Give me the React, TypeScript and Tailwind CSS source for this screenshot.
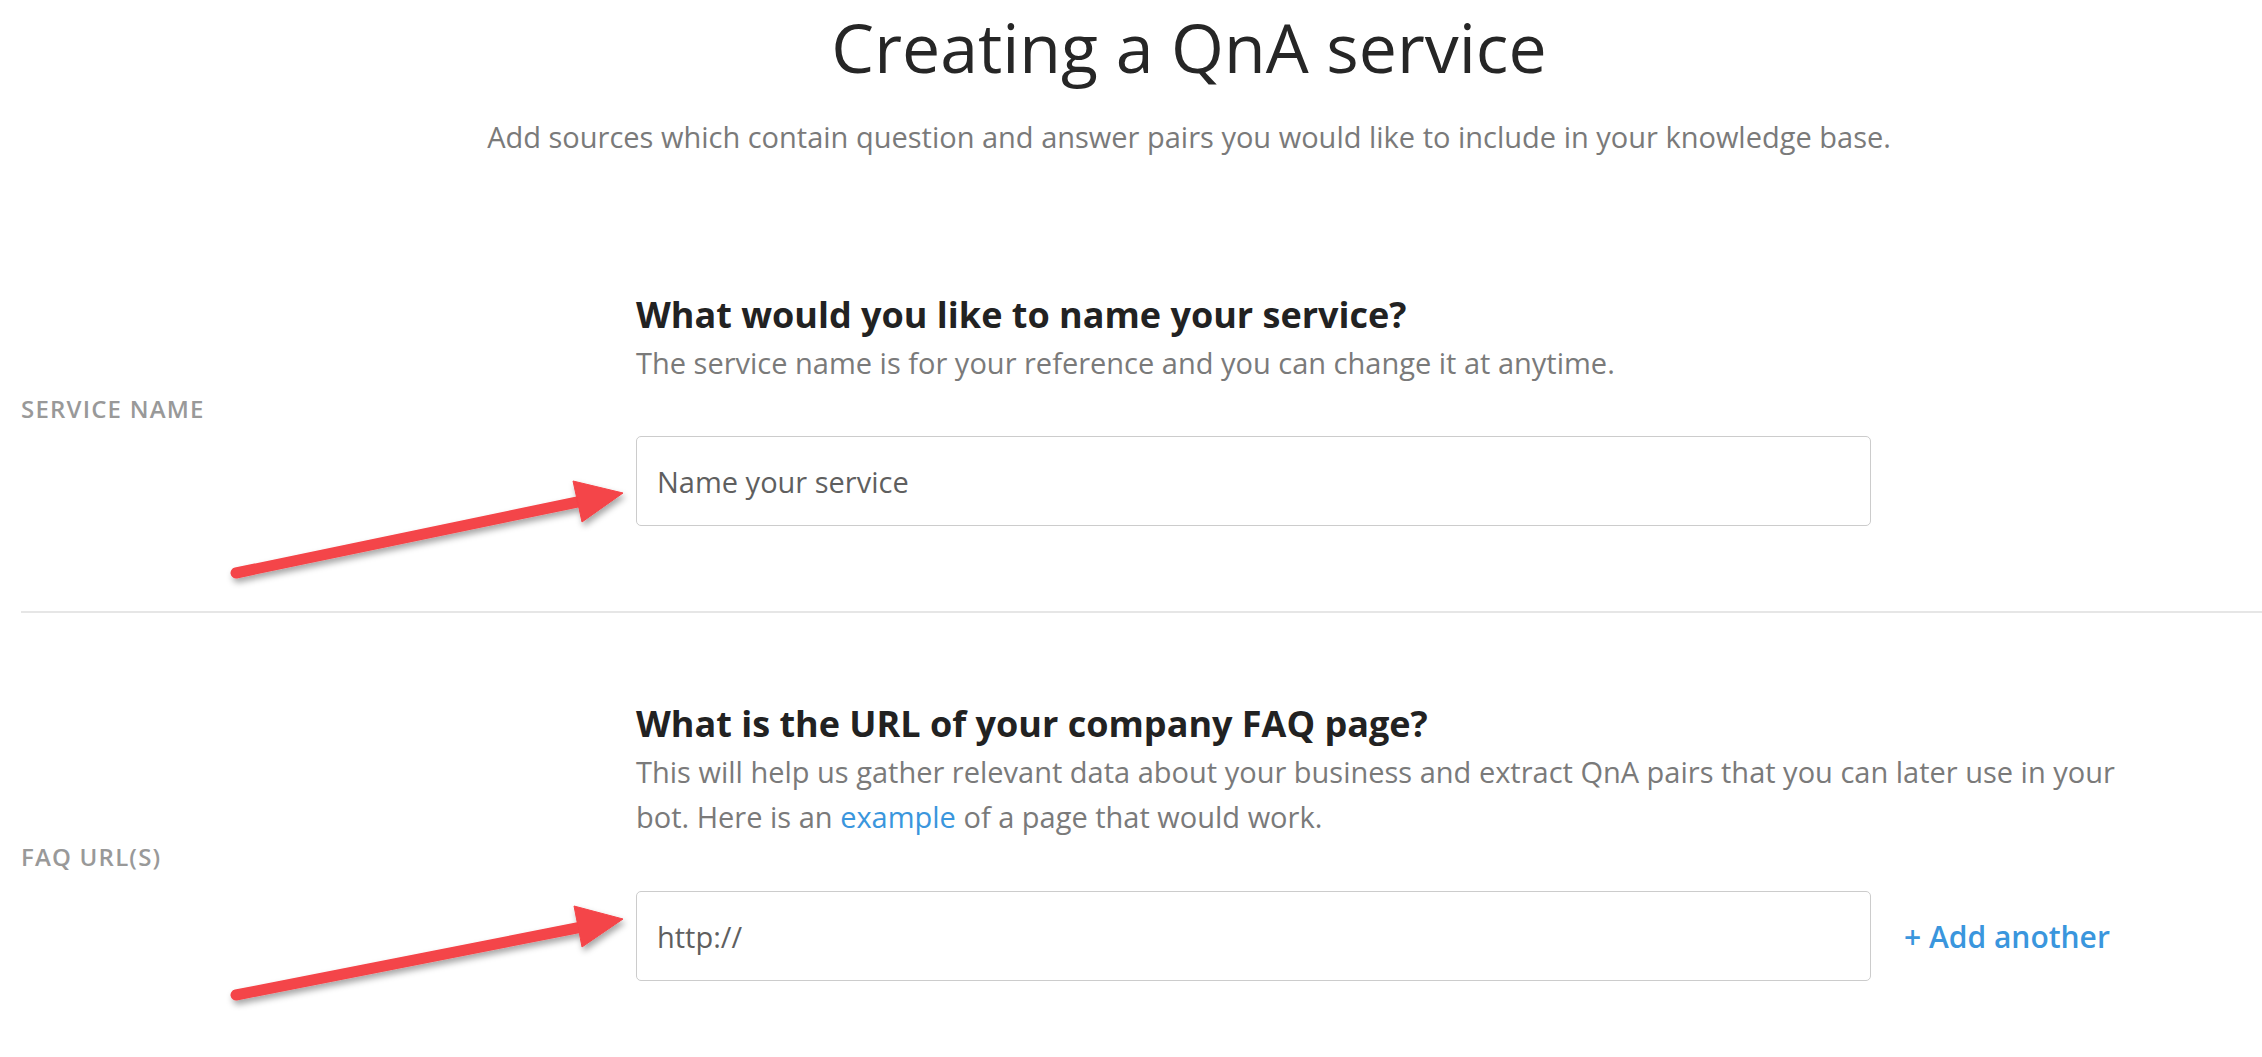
import React from 'react';

const Arrows: React.FC = () => (
  <svg
    className="absolute left-0 top-0 pointer-events-none"
    width="700"
    height="1057"
    viewBox="0 0 700 1057"
  >
    <defs>
      <filter id="arrowShadow" x="-20%" y="-40%" width="140%" height="180%">
        <feDropShadow dx="2" dy="4" stdDeviation="3" floodColor="#000" floodOpacity="0.35" />
      </filter>
    </defs>
    {/* arrow to service name input */}
    <g filter="url(#arrowShadow)" fill="#f44448" stroke="#f44448">
      <line x1="236" y1="573" x2="592" y2="499" strokeWidth="11" strokeLinecap="round" />
      <polygon points="623,493 582,522 573,481" strokeWidth="1" strokeLinejoin="round" />
    </g>
    {/* arrow to FAQ url input */}
    <g filter="url(#arrowShadow)" fill="#f44448" stroke="#f44448">
      <line x1="236" y1="995" x2="592" y2="925" strokeWidth="11" strokeLinecap="round" />
      <polygon points="623,919 582,947 574,906" strokeWidth="1" strokeLinejoin="round" />
    </g>
  </svg>
);

const App: React.FC = () => {
  return (
    <div className="relative min-h-screen bg-white font-['Open_Sans',_'Noto_Sans',_sans-serif] text-[#222]">
      <header className="pl-[116px] pt-[13px] text-center">
        <h1 className="text-[68px] leading-none font-normal text-[#262626]">Creating a QnA service</h1>
        <p className="mt-[36px] text-[29px] leading-[40px] text-[#7a7a7a]">
          Add sources which contain question and answer pairs you would like to include in your knowledge base.
        </p>
      </header>

      {/* service name */}
      <section className="ml-[21px] grid grid-cols-[615px_1fr] items-center pt-[135px] pb-[85px]">
        <div className="text-[24px] font-semibold uppercase tracking-[1.2px] text-[#999]">Service name</div>
        <div className="max-w-[1505px]">
          <h2 className="mb-[3px] text-[36px] leading-[45px] font-bold text-[#222]">What would you like to name your service?</h2>
          <p className="text-[29px] leading-[45px] text-[#7a7a7a]">
            The service name is for your reference and you can change it at anytime.
          </p>
          <input
            placeholder="Name your service"
            className="mt-[51px] block h-[90px] w-[1235px] rounded-[5px] border border-[#cccccc] px-[20px] text-[29px] text-[#555] placeholder:text-[#5f5f5f] outline-none"
          />
        </div>
      </section>

      {/* faq urls */}
      <section className="ml-[21px] grid grid-cols-[615px_1fr] items-center border-t-2 border-[#e6e6e6] pt-[88px] pb-[60px]">
        <div className="pt-[31px] text-[24px] font-semibold uppercase tracking-[1.2px] text-[#999]">FAQ URL(s)</div>
        <div className="max-w-[1505px]">
          <h2 className="mb-[3px] text-[36px] leading-[45px] font-bold text-[#222]">What is the URL of your company FAQ page?</h2>
          <p className="text-[29px] leading-[45px] text-[#7a7a7a]">
            This will help us gather relevant data about your business and extract QnA pairs that you can later use in your
            bot. Here is an <a href="#" className="text-[#3a96dd]">example</a> of a page that would work.
          </p>
          <div className="mt-[52px] flex items-center gap-[33px]">
            <input
              defaultValue="http://"
              className="block h-[90px] w-[1235px] shrink-0 rounded-[5px] border border-[#cccccc] px-[20px] text-[29px] text-[#5f5f5f] outline-none"
            />
            <button className="text-[30px] font-semibold text-[#3a96dd]">+ Add another</button>
          </div>
        </div>
      </section>

      <Arrows />
    </div>
  );
};

export default App;
